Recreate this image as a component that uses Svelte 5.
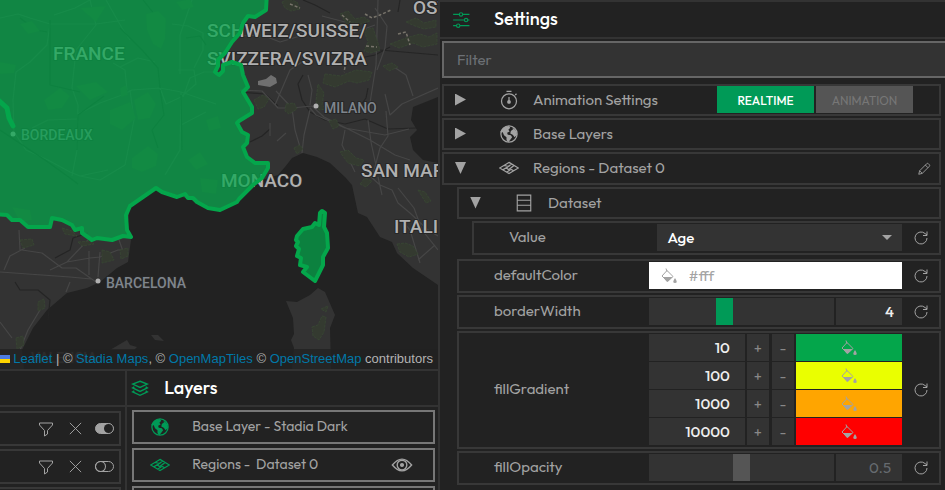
<script>
  let filter = $state('');
  let border = $state(4);
  let opacity = $state(0.5);
  let column = $state('Age');
  let fallback = $state('#fff');
  let stops = $state([
    { value: '10', color: '#04a64b' },
    { value: '100', color: '#eaff00' },
    { value: '1000', color: '#ffa500' },
    { value: '10000', color: '#ff0000' }
  ]);
  let rows = $state([{ on: true }, { on: false }, { on: false }]);

  const france =
    'M-8 -8H267L266 10 255 17 248 16 243 23 240 33 232 42 225 53 218 60 218 66 215 72 219 75 223 71 223 65 232 62 241 65 243 75 248 87 243 92 252 107 252 113 239 121 237 123 242 132 248 135 247 143 243 147 247 157 255 163 268 163 268 168 262 178 253 185 239 199 237 202 220 210 208 208 197 202 193 198 188 198 185 194 177 197 162 192 156 188 130 206 126 215 127 230 131 237 123 236 112 240 97 238 92 240 82 233 82 228 75 230 72 225 62 220 52 218 50 227 28 227 20 220 12 220 7 215 -8 214Z';
  const corsica =
    'M322 211L320 213 319 225 315 223 312 227 303 229 297 236 296 240 298 242 296 246 299 249 297 256 301 258 300 265 307 267 303 272 315 281 323 265 323 257 328 248 327 233 324 227 325 213Z';
  const roads = [
    'M0 18L18 14 30 18 50 24 96 24 125 20M50 24L47 45 30 62 16 72 13 100 14 132 26 150 48 160 70 172 80 176 108 170M90 0L96 25 76 50 72 88 78 105 77 150 72 176M54 15L75 8 90 0M78 114L100 103 122 95 132 90 160 88 181 92 216 104M130 90L134 120 125 165M32 128L48 120 77 119M113 63L125 70 127 90M120 67L138 58 155 62M106 0L122 28 130 40M181 92L180 150 165 175M183 97L190 78 204 72 216 72M180 74L180 35 192 0M172 24L188 26 203 33 203 50 194 68M178 70L194 70 196 84 182 96M181 125L206 112M160 88L166 104 181 97M80 176L100 180 125 165',
    'M240 90L262 91 278 108 292 108 312 106 324 117 370 140 395 155 410 160M310 108L316 115 345 128 385 135 409 129M292 108L295 130 300 147M310 110L304 135 302 153M275 105L290 70 305 60M308 75L312 90 310 105M345 130L342 145 355 172M368 120L371 142 378 175M386 111L388 136 380 148 372 178M378 0L376 65 370 103M391 65L406 75 413 96M385 94L390 115 402 104 438 88M276 91L292 108M240 36L262 35 280 42 300 36M335 25L350 34 375 25M375 8L387 26 385 48 377 70M270 123L270 136M277 141L286 133M322 16L345 22',
    'M22 250L42 253 62 268 76 268 96 282M0 272L42 275 70 277 91 279M50 270L67 262 90 258 100 257 118 250 128 250M4 270L10 256 25 248M89 251V275M100 252L98 277M119 240L124 254M70 282L66 292M67 262L88 240M40 310L28 330 20 350M0 322L12 338M19 230L20 250',
    'M370 176L380 185 392 190 398 203 410 213 428 230 438 236M378 177L382 195M402 220L410 230 420 263M418 260L435 245M398 188L414 208 422 230 438 250'
  ];
  const woods =
    'M282 2l6-3 9 3 3 7-9 2-6-3zM340 14l8-3 7 8 9-2 6 4-9 3-8-2-6 2zM364 30l9-2 4 12 3 10-9 3-7-2 4-9zM390 44l16-6 14-4 9 3 8-4v11l-14 3-10-4-14 5zM406 22l10-4 8 5 12-3v7l-12 2-9-3zM325 74l16 2 15-6 16 2-3 8-12 3-8-2-14 6-12-4zM254 100l9-5 6 4-5 8-6 2zM286 104l8-1 3 6-8 5-4-3zM318 84l6 9-2 12 5 4-8 1-3-9zM340 152l8-2 8 8 8 2-4 6-12-3zM294 148l6-3 3 4-6 5zM329 121l7-2 3 7-6 3zM397 244l8-1 8 3 5 8-9 3-9-5zM418 190l7 2 6 9-5 2zM312 327l6-2 4-9 4 1-2 15-5 8-6-4zM321 309l7-3-2 6zM20 240l12-1 2 6-11 3zM38 302l6-3 1 9-7 3zM62 228l10 3 5 5-12-2zM102 250l8 2 4 8-12 3zM120 250l8-2v8l-7 3zM78 242l12-1 4 3-12 2zM16 338l7-2 1 9-7 4zM360 184l5-6 7 3-6 6zM254 33l8-3 3 5-7 3zM383 66l9-3 6 4-9 4z';
  const frenchWoods =
    'M146 14l12-3 8 8-1 20-4 10-8-5-6-14zM44 100l16-12 10 8-8 12-14 2zM76 86l20-4 12 10-18 8zM110 110l20-8 6 16-14 12-12-6zM134 100l14-8 8 12-6 14-12 2zM132 158l16-12 10 8-2 12-14 6-10-4zM188 160l12-8 8 12-12 6zM20 24l12-3 8 10-12 3zM176 2l14-3 4 8-12 3zM0 62l16 3-2 8-14 1zM12 207l18 3 2 10-12 2zM200 178l18 2-2 14-14-2zM120 88l6-3 2 10-7 2zM206 120l12-4 3 12-12 3zM80 8l26-2-10 16z';
</script>

{#snippet icon(name, size = 20)}
  <svg class="icon" width={size} height={size} viewBox="0 0 32 32" fill="none" stroke="currentColor" stroke-width="2" aria-hidden="true">
    {#if name === 'sliders'}
      <path d="M2 6h11M19 6h12M2 16h20M28 16h3M2 26h6M14 26h17" /><circle cx="16" cy="6" r="3" /><circle cx="25" cy="16" r="3" /><circle cx="11" cy="26" r="3" />
    {:else if name === 'globe'}
      <circle cx="16" cy="16" r="13" /><path fill="currentColor" stroke="none" d="M16 3l2 3-3 3 2 3-4 2 1 3 5 1 2 3-3 4-3 4-3-3v-5l-4-3-2-5-4 0Q5 4 16 3M20 5q8 3 9 12l-4 4-3-4-4-2 1-4 4-3z" />
    {:else if name === 'stack'}
      <path stroke-width="2.6" d="M16 4l13 5-13 6L3 9zM6 14l-3 2 13 6 13-6-3-2M6 21l-3 2 13 6 13-6-3-2" />
    {:else if name === 'region'}
      <path d="M16 7L31 16 16 25 1 16zM20 9.500L12 16 17 20 12 22.500M8.500 12L15 13.500 6 19M24 12L17 17.500 23 20" />
    {:else if name === 'timer'}
      <circle cx="16" cy="18" r="12" /><path d="M12 2h8M16 11v8M26 8l2-2" /><circle cx="16" cy="19" r="2" fill="currentColor" />
    {:else if name === 'table'}
      <path d="M4 2h24v28H4zM4 11h24M4 20h24" />
    {:else if name === 'edit'}
      <path d="M4 28l2-8L22 4q2-2 4 0l2 2q2 2 0 4L12 26zM19 7l6 6M6 20l6 6" />
    {:else if name === 'reset'}
      <path d="M28 16A12 12 0 1 1 24 7l4 3M28 3v8h-8" />
    {:else if name === 'filter'}
      <path d="M3 4h26v4L19 19v7l-6 4V19L3 8z" />
    {:else if name === 'close'}
      <path d="M4 4l24 24M28 4L4 28" />
    {:else if name === 'eye'}
      <path d="M2 16Q16-1 30 16 16 33 2 16z" /><circle cx="16" cy="16" r="7" /><circle cx="16" cy="16" r="2" fill="currentColor" />
    {:else if name === 'paint'}
      <path d="M10 1l2 6M12 5l12 12-11 10L2 16z" /><path fill="currentColor" stroke="none" d="M4 18h19l-9 9h-3zM28 20q7 10 0 10t0-10" />
    {/if}
  </svg>
{/snippet}

{#snippet reset(name)}
  <button class="reset" aria-label="Reset {name}">{@render icon('reset', 16)}</button>
{/snippet}

<div class="app">
  <main>
    <section class="map" aria-label="Map">
      <svg viewBox="0 0 438 369" preserveAspectRatio="xMinYMin slice" aria-hidden="true">
        <g fill="#333">
          <path d="M0 0H438V97L413 107 411 120 417 130 410 137 413 150 423 160 438 163V285L413 268 397 253 392 242 380 237 367 217 358 213 352 185 345 177 330 163 317 157 303 153 292 158 285 167 278 175 262 180 237 202 220 210 197 202 156 188 130 206 127 230 131 240 128 262 117 268 100 282 87 288 67 293 47 310 33 328 22 350 24 369H0Z" />
          <path d="M318 288L325 292 335 315 330 328 331 369H292L294 348 291 340 294 334 293 318 286 301 297 302 310 295ZM110 350L127 340 130 345 137 347 134 350ZM151 335L158 335 164 341 155 340Z" />
        </g>
        <path class="stream" d="M303 75L298 84 302 100 310 112 325 120 345 124 365 119 388 129 416 128M361 105L366 98 368 88M240 92L265 94 278 106M303 0L315 5 330 13M350 60L375 55 390 47M400 0L398 12M438 55L380 50M250 142L262 136 270 129M15 282L20 290 38 290 50 300 48 320M55 258L70 250 73 238 88 233" />
        <path class="roads" d={roads[1]} />
        <path class="roads" d={roads[2]} />
        <path class="roads" d={roads[3]} />
        <path class="woods" d={woods} />
        <path class="snow" d="M342 15L350 22M365 14L372 18 380 15 391 10M398 34L406 32 410 45M366 46L377 47M290 4L300 8M345 67L344 72" />
        <path d="M258 81L266 79 271 75 276 78 277 83 270 87 258 85Z" fill="#707070" />
        <path class="roads" d={roads[0]} />
        <path class="stream" d="M20 18L36 30 47 32M50 20V85L80 92M120 28L142 50 158 68 160 88M143 0L155 15 162 35M77 150L78 115 104 96M160 90L164 115 152 130 158 148M0 130L45 160 70 178 78 184M181 95L182 150M186 38L200 36 206 45" />
        <path d={frenchWoods} fill="#36402f" />
        <g class="country">
          <text x="53" y="60">FRANCE</text>
          <text x="207" y="37">SCHWEIZ/SUISSE/</text>
          <text x="207" y="65">SVIZZERA/SVIZRA</text>
          <text x="413" y="14">OSTERREICH</text>
          <text x="221" y="187">MONACO</text>
          <text x="361" y="177">SAN MARINO</text>
          <text x="394" y="233">ITALIA</text>
        </g>
        <g class="city">
          <circle cx="13" cy="134" r="2.5" /><text x="21" y="140">BORDEAUX</text>
          <circle cx="316" cy="106" r="2.5" /><text x="324" y="113">MILANO</text>
          <circle cx="98" cy="281" r="2.5" /><text x="106" y="288">BARCELONA</text>
          <text class="dim" x="31" y="363">VALENCIA</text>
        </g>
        <path class="region" d={france} />
        <path class="region" d={corsica} />
        <path class="shore" d="M-3 99L7 108 9 118 13 126" />
      </svg>
      <div class="credit">
        <svg width="12" height="8" viewBox="0 0 12 8" aria-hidden="true"><path fill="#4c7be1" d="M0 0h12v4H0z" /><path fill="#ffd500" d="M0 4h12v4H0z" /></svg>
        <a href="#leaflet">Leaflet</a> | © <a href="#stadia">Stadia Maps</a>, © <a href="#tiles">OpenMapTiles</a> © <a href="#osm">OpenStreetMap</a> contributors
      </div>
    </section>

    <div class="lower">
      <section class="data">
        <header></header>
        {#each rows as row, i}
          <div class="data-row">
            <button aria-label="Filter data">{@render icon('filter', 16)}</button>
            <button aria-label="Remove data">{@render icon('close', 15)}</button>
            <label class="toggle"><input type="checkbox" bind:checked={row.on} aria-label="Enable dataset {i}" /><span></span></label>
          </div>
        {/each}
      </section>
      <section class="layers">
        <header><span class="accent">{@render icon('stack', 18)}</span><h2>Layers</h2></header>
        <div class="layer"><span class="accent">{@render icon('globe')}</span><span class="layer-name">Base Layer - Stadia Dark</span></div>
        <div class="layer"><span class="accent">{@render icon('region')}</span><span class="layer-name">Regions -&nbsp; Dataset 0</span><button aria-label="Toggle visibility">{@render icon('eye', 22)}</button></div>
        <div class="layer"></div>
      </section>
    </div>
  </main>

  <aside class="settings">
    <header><span class="accent">{@render icon('sliders', 18)}</span><h2>Settings</h2></header>
    <input class="filter" type="text" placeholder="Filter" aria-label="Filter" bind:value={filter} />

    <div class="tree">
      <div class="row">
        <button class="fold"><span class="arrow"></span><span class="kind">{@render icon('timer')}</span>Animation Settings</button>
        <div class="modes"><button class="on">REALTIME</button><button>ANIMATION</button></div>
      </div>
      <div class="row">
        <button class="fold"><span class="arrow"></span><span class="kind">{@render icon('globe')}</span>Base Layers</button>
      </div>
      <div class="row">
        <button class="fold"><span class="arrow open"></span><span class="kind">{@render icon('region')}</span>Regions - Dataset 0</button>
        <button class="edit" aria-label="Rename">{@render icon('edit', 14)}</button>
      </div>

      <div class="group">
        <div class="row">
          <button class="fold"><span class="arrow open"></span><span class="kind">{@render icon('table', 18)}</span>Dataset</button>
        </div>
        <div class="group last">
          <div class="field">
            <label for="column">Value</label>
            <div class="pick"><select id="column" bind:value={column}><option>Age</option></select></div>
            {@render reset('value')}
          </div>
        </div>

        <div class="field">
          <label for="color">defaultColor</label>
          <div class="color">{@render icon('paint', 16)}<input id="color" type="text" bind:value={fallback} /></div>
          {@render reset('color')}
        </div>
        <div class="field">
          <label for="border">borderWidth</label>
          <div class="range">
            <input id="border" type="range" min="0" max="10" bind:value={border} />
            <input class="number" type="text" aria-label="Border width" bind:value={border} />
          </div>
          {@render reset('width')}
        </div>
        <div class="field">
          <label for="stop0">fillGradient</label>
          <div class="stops">
            {#each stops as stop, i}
              <div class="stop">
                <input id="stop{i}" class="number" type="text" aria-label="Threshold {i + 1}" bind:value={stop.value} />
                <button class="step" aria-label="Add stop">+</button>
                <button class="step minus" aria-label="Remove stop">-</button>
                <button class="swatch" style:background={stop.color} aria-label="Colour {stop.color}">{@render icon('paint', 16)}</button>
              </div>
            {/each}
          </div>
          {@render reset('gradient')}
        </div>
        <div class="field">
          <label for="opacity">fillOpacity</label>
          <div class="range unset">
            <input id="opacity" type="range" min="0" max="1" step="0.1" bind:value={opacity} />
            <input class="number" type="text" aria-label="Opacity" bind:value={opacity} />
          </div>
          {@render reset('opacity')}
        </div>
      </div>
    </div>
  </aside>
</div>

<style>
  :global(body) { background: #222; }
  .app, .app * { box-sizing: border-box; }
  .app {
    display: grid;
    grid-template-columns: 438fr 507fr;
    height: 100vh;
    overflow: hidden;
    background: #222;
    color: #a3a3a3;
    font: 15px/20px Outfit, Lato, sans-serif;
  }
  button, input, select { font: inherit; color: inherit; background: none; border: 0; padding: 0; margin: 0; border-radius: 0; min-width: 0; }
  input:focus, select:focus { outline: none; }
  .icon { display: block; flex: none; }
  .accent { color: #009a57; display: flex; justify-content: center; }
  h2 { margin: 0; color: #fff; font-size: 18px; font-weight: 500; line-height: 24px; }

  main { display: grid; grid-template-rows: 369fr 121fr; min-width: 0; min-height: 0; }
  .map { position: relative; overflow: hidden; min-height: 0; }
  .map > svg { display: block; width: 100%; height: 100%; background: #222; }
  .roads, .stream, .snow { fill: none; stroke-linejoin: round; }
  .roads { stroke: #464646; stroke-width: 1.2; }
  .stream { stroke: #252525; stroke-width: 1.2; }
  .snow { stroke: #77736a; stroke-width: 1.5; stroke-dasharray: 3 2; }
  .woods { fill: #343a30; stroke: #394834; stroke-width: 0.8; stroke-dasharray: 3 1; }
  .country, .city { font-family: Roboto, sans-serif; paint-order: stroke; stroke: #262626; stroke-width: 2px; stroke-linejoin: round; }
  .country { font-size: 19px; font-weight: 500; fill: #b0b0b0; }
  .city { font-size: 14px; font-weight: 500; fill: #7f858d; }
  .city circle { fill: #b0b0b0; stroke: none; }
  .city .dim { fill: #555; }
  .region { fill: #04a64b; fill-opacity: 0.72; stroke: #04a64b; stroke-width: 4; stroke-linejoin: round; }
  .shore { fill: none; stroke: #04a64b; stroke-width: 5; stroke-linecap: round; }
  .credit {
    position: absolute;
    right: 0;
    bottom: 0;
    padding: 0 5px;
    white-space: nowrap;
    font: 13px/20px "Liberation Sans", Arial, sans-serif;
    color: #b3b3b3;
    background: rgba(34, 34, 34, 0.8);
  }
  .credit a { color: #0078a8; text-decoration: none; }

  .lower { display: grid; grid-template-columns: 2fr 5fr; border-top: 2px solid #333; min-height: 0; overflow: hidden; }
  header { display: flex; align-items: center; height: 36px; border-bottom: 2px solid #333; }
  .data-row { display: flex; align-items: center; justify-content: flex-end; gap: 14px; height: 35px; margin: 0 4px 3px 0; padding-right: 5px; border: 2px solid #383838; border-left: 0; }
  .data header { margin-bottom: 4px; }
  .toggle { display: flex; position: relative; margin-left: -2px; }
  .toggle input { position: absolute; opacity: 0; }
  .toggle span { display: block; width: 19px; height: 11px; border: 1px solid #a3a3a3; border-radius: 6px; }
  .toggle span::before { content: ''; display: block; width: 9px; height: 9px; border-radius: 5px; box-shadow: 0 0 0 1px #a3a3a3; }
  .toggle input:checked + span { background: #a3a3a3; }
  .toggle input:checked + span::before { margin-left: 8px; background: #222; box-shadow: none; }
  .layers { border-left: 2px solid #333; }
  .layers header { gap: 15px; padding-left: 4px; margin-bottom: 3px; }
  .layers h2 { padding-bottom: 1px; }
  .layer { display: flex; align-items: center; height: 34px; margin: 0 3px 4px 5px; padding: 0 20px 0 16px; border: 2px solid #777; font-size: 14px; }
  .layer-name { flex: 1; padding: 0 0 2px 22px; white-space: nowrap; }

  .settings { border: solid #333; border-width: 2px 0 0 2px; min-width: 0; overflow: hidden; }
  .settings header { gap: 24px; height: 37px; padding-left: 12px; }
  .settings h2 { padding-bottom: 1px; }
  .filter { display: block; width: calc(100% + 2px); height: 37px; margin: 2px 0 6px 2px; padding: 0 13px; border: 2px solid #666; background: #333; }
  .filter::placeholder { color: #6c7075; opacity: 1; }
  .tree { display: flex; flex-direction: column; gap: 2px; padding: 0 4px 0 2px; }
  .group { display: flex; flex-direction: column; gap: 2px; margin-left: 15px; }
  .last { margin-bottom: 2px; }
  .row { display: flex; height: 32px; border: 2px solid #383838; }
  .row:nth-child(3) { height: 33px; }
  .fold { display: flex; align-items: center; flex: 1; padding-bottom: 1px; text-align: left; white-space: nowrap; }
  .arrow { width: 11px; height: 12px; margin: 0 33px 0 11px; background: #a3a3a3; clip-path: polygon(0 0, 100% 50%, 0 100%); }
  .arrow.open { clip-path: polygon(0 0, 100% 0, 50% 100%); }
  .kind { display: flex; justify-content: center; width: 20px; margin-right: 14px; }
  .modes { display: flex; gap: 2px; margin: 0 26px 1px 0; font-size: 12px; }
  .modes button { width: 97px; padding-top: 2px; background: #555; color: #777; }
  .modes .on { background: #009a57; color: #fff; font-weight: 500; }
  .edit { padding-right: 8px; }
  .field { display: grid; grid-template-columns: 3fr minmax(0, 4fr) 37px; align-items: center; padding: 1px 0 2px; border: 2px solid #383838; }
  .field > label { padding: 0 0 1px 35px; }
  .reset { display: flex; justify-content: center; }
  .pick { position: relative; background: #333; }
  .pick::after { content: ''; position: absolute; right: 10px; top: 11px; border: 5px solid transparent; border-top-color: #a3a3a3; border-bottom: 0; pointer-events: none; }
  .pick select { display: block; appearance: none; width: 100%; height: 27px; padding-left: 10px; color: #fff; font-weight: 500; }
  .color { display: flex; align-items: center; gap: 12px; height: 27px; padding-left: 12px; background: #fff; }
  .color input { flex: 1; }
  .range { display: grid; grid-template-columns: 14fr 5fr; gap: 2px; height: 27px; }
  .range input[type='range'] { appearance: none; width: 100%; height: 27px; background: #333; }
  .range input[type='range']::-webkit-slider-thumb { appearance: none; width: 17px; height: 27px; background: #009a57; }
  .range.unset input[type='range']::-webkit-slider-thumb { background: #555; }
  .number { width: 100%; height: 27px; padding: 0 8px 1px 0; background: #333; color: #eee; text-align: right; font-weight: 500; }
  .unset .number { color: #666b70; font-weight: 400; padding-right: 11px; }
  .stops { display: grid; gap: 1px; }
  .stop { display: grid; grid-template-columns: 96fr 22px 23px 106fr; gap: 2px; height: 27px; }
  .stop .number { padding-right: 15px; }
  .step { background: #333; color: #888; }
  .step.minus { margin-left: 1px; }
  .swatch { display: flex; align-items: center; justify-content: center; }
</style>
